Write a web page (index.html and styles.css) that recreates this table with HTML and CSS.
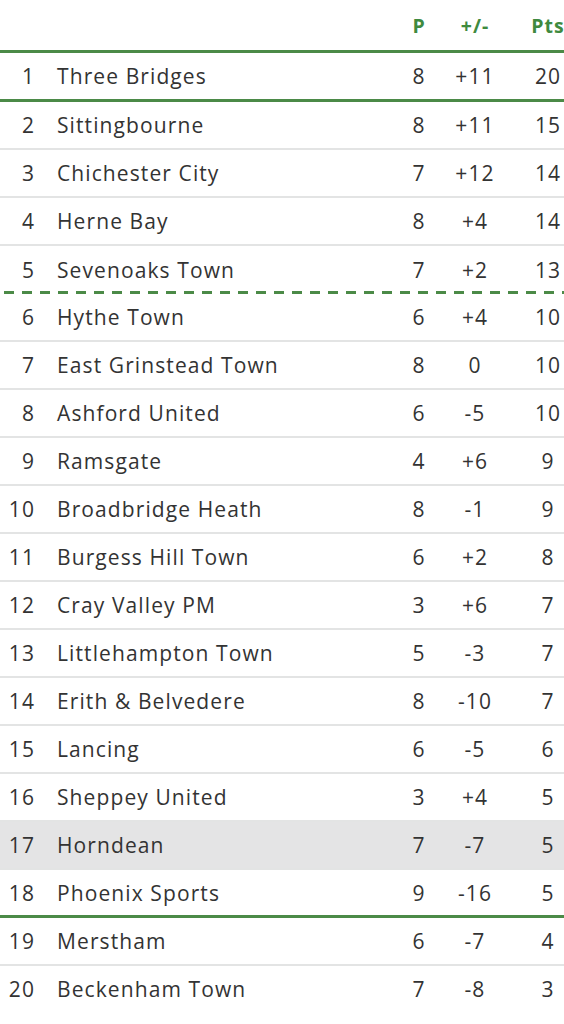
FILE: index.html
```html
<!DOCTYPE html>
<html lang="en">
<head>
<meta charset="utf-8">
<title>League Table</title>
<link rel="stylesheet" href="styles.css">
</head>
<body>
<div class="table">
  <div class="row head">
    <span class="pos"></span><span class="name"></span><span class="num">P</span><span class="num">+/-</span><span class="num pts">Pts</span>
  </div>
  <div class="row first"><span class="pos">1</span><span class="name">Three Bridges</span><span class="num">8</span><span class="num">+11</span><span class="num pts">20</span></div>
  <div class="row"><span class="pos">2</span><span class="name">Sittingbourne</span><span class="num">8</span><span class="num">+11</span><span class="num pts">15</span></div>
  <div class="row"><span class="pos">3</span><span class="name">Chichester City</span><span class="num">7</span><span class="num">+12</span><span class="num pts">14</span></div>
  <div class="row"><span class="pos">4</span><span class="name">Herne Bay</span><span class="num">8</span><span class="num">+4</span><span class="num pts">14</span></div>
  <div class="row playoff"><span class="pos">5</span><span class="name">Sevenoaks Town</span><span class="num">7</span><span class="num">+2</span><span class="num pts">13</span></div>
  <div class="row"><span class="pos">6</span><span class="name">Hythe Town</span><span class="num">6</span><span class="num">+4</span><span class="num pts">10</span></div>
  <div class="row"><span class="pos">7</span><span class="name">East Grinstead Town</span><span class="num">8</span><span class="num">0</span><span class="num pts">10</span></div>
  <div class="row"><span class="pos">8</span><span class="name">Ashford United</span><span class="num">6</span><span class="num">-5</span><span class="num pts">10</span></div>
  <div class="row"><span class="pos">9</span><span class="name">Ramsgate</span><span class="num">4</span><span class="num">+6</span><span class="num pts">9</span></div>
  <div class="row"><span class="pos">10</span><span class="name">Broadbridge Heath</span><span class="num">8</span><span class="num">-1</span><span class="num pts">9</span></div>
  <div class="row"><span class="pos">11</span><span class="name">Burgess Hill Town</span><span class="num">6</span><span class="num">+2</span><span class="num pts">8</span></div>
  <div class="row"><span class="pos">12</span><span class="name">Cray Valley PM</span><span class="num">3</span><span class="num">+6</span><span class="num pts">7</span></div>
  <div class="row"><span class="pos">13</span><span class="name">Littlehampton Town</span><span class="num">5</span><span class="num">-3</span><span class="num pts">7</span></div>
  <div class="row"><span class="pos">14</span><span class="name">Erith &amp; Belvedere</span><span class="num">8</span><span class="num">-10</span><span class="num pts">7</span></div>
  <div class="row"><span class="pos">15</span><span class="name">Lancing</span><span class="num">6</span><span class="num">-5</span><span class="num pts">6</span></div>
  <div class="row"><span class="pos">16</span><span class="name">Sheppey United</span><span class="num">3</span><span class="num">+4</span><span class="num pts">5</span></div>
  <div class="row highlight"><span class="pos">17</span><span class="name">Horndean</span><span class="num">7</span><span class="num">-7</span><span class="num pts">5</span></div>
  <div class="row relegation"><span class="pos">18</span><span class="name">Phoenix Sports</span><span class="num">9</span><span class="num">-16</span><span class="num pts">5</span></div>
  <div class="row"><span class="pos">19</span><span class="name">Merstham</span><span class="num">6</span><span class="num">-7</span><span class="num pts">4</span></div>
  <div class="row last"><span class="pos">20</span><span class="name">Beckenham Town</span><span class="num">7</span><span class="num">-8</span><span class="num pts">3</span></div>
</div>
</body>
</html>
```
FILE: styles.css
```css
html, body {
  margin: 0;
  padding: 0;
  background: #ffffff;
  overflow-x: hidden;
}
body {
  font-family: "Open Sans", "Liberation Sans", sans-serif;
  color: #333333;
  font-size: 21px;
  letter-spacing: 1.1px;
}
.table {
  width: 593px;
}
.row {
  display: grid;
  grid-template-columns: 46px 345px 56px 56px 90px;
  align-items: center;
  height: 46px;
  border-bottom: 2px solid #e3e4e4;
}
.pos {
  text-align: right;
  padding-right: 11px;
}
.name {
  padding-left: 11px;
  white-space: nowrap;
}
.num {
  text-align: center;
}
.head {
  height: 50px;
  border-bottom: 3px solid #4b8a47;
  color: #3f8a3f;
  font-weight: 700;
  font-size: 19.5px;
  letter-spacing: 1px;
}
.first {
  height: 46px;
  border-bottom: 3px solid #4b8a47;
}
.playoff {
  height: 48px;
  border-bottom: none;
  background-image: linear-gradient(90deg, #4b8a47 0 10px, transparent 10px 18px);
  background-size: 18px 3px;
  background-repeat: repeat-x;
  background-position: 4px 100%;
}
.highlight {
  background: #e4e4e5;
}
.relegation {
  height: 45px;
  border-bottom: 3px solid #4b8a47;
}
.last {
  border-bottom: none;
}
```
